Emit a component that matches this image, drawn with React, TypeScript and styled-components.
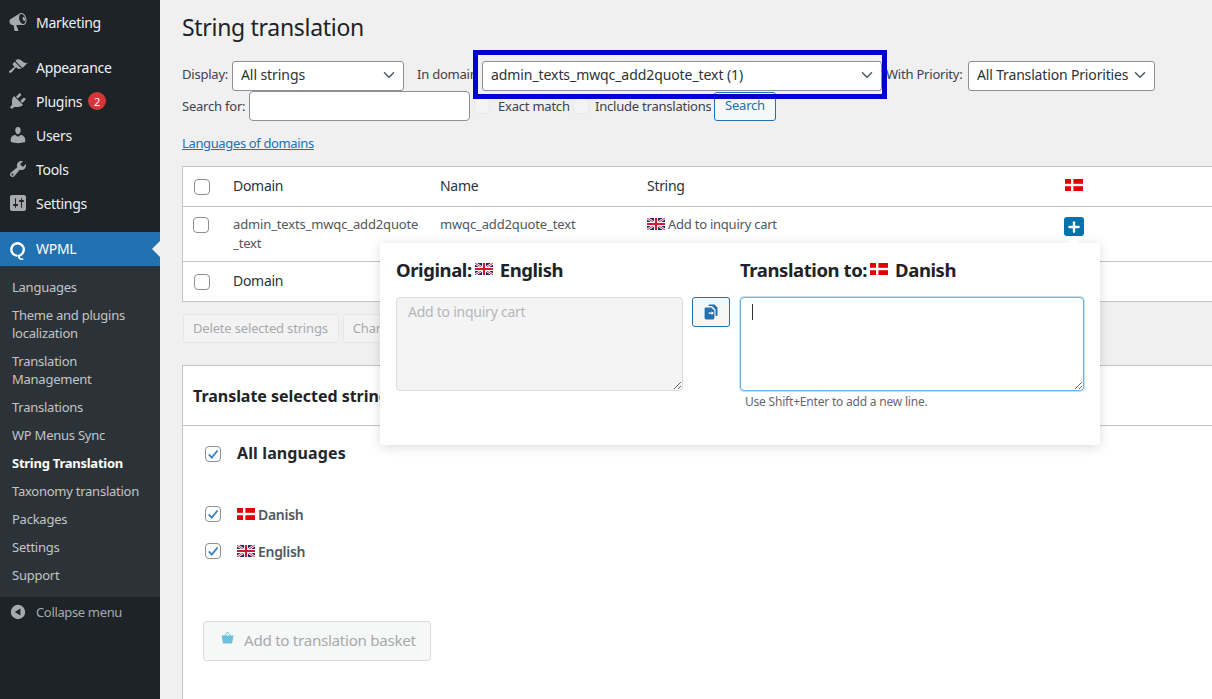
import React from "react";
import styled, { createGlobalStyle } from "styled-components";
import { ChevronDown, Plus } from "lucide-react";

const GlobalStyle = createGlobalStyle`
  html, body {
    margin: 0;
    padding: 0;
    height: 100%;
    overflow: hidden;
    background: #f0f0f1;
    font-family: "Noto Sans", sans-serif;
    font-size: 14px;
    letter-spacing: -0.3px;
    color: #3c434a;
  }
  * { box-sizing: border-box; }
`;

const Page = styled.div`
  display: flex;
  width: 1212px;
  height: 699px;
  overflow: hidden;
  position: relative;
`;

/* sidebar */

const Sidebar = styled.nav`
  width: 160px;
  flex: none;
  height: 699px;
  background: #1d2327;
  padding-top: 5px;
  color: #f0f0f1;
`;

const MenuItem = styled.div<{ $gap?: number }>`
  display: flex;
  align-items: center;
  height: 34px;
  margin-top: ${(p) => p.$gap ?? 0}px;
  padding-left: 8px;
  gap: 8px;
  svg { width: 20px; height: 20px; fill: #a7aaad; flex: none; }
`;

const CurrentItem = styled(MenuItem)`
  background: #2271b1;
  color: #fff;
  position: relative;
  margin-top: 12px;
  padding-bottom: 1px;
  svg { fill: none; width: 20px; height: 20px; position: relative; top: 2px; }
  &::after {
    content: "";
    position: absolute;
    right: 0;
    top: 9px;
    border: 8px solid transparent;
    border-right-color: #f0f0f1;
  }
`;

const Badge = styled.span`
  display: inline-flex;
  align-items: center;
  justify-content: center;
  width: 18px;
  height: 18px;
  margin-left: -2px;
  border-radius: 50%;
  background: #d63638;
  color: #fff;
  font-size: 11px;
  letter-spacing: 0;
`;

const Submenu = styled.div`
  background: #2c3338;
  padding: 7px 0 8px;
`;

const SubItem = styled.div<{ $active?: boolean }>`
  padding: 5px 12px;
  font-size: 13px;
  line-height: 18px;
  letter-spacing: -0.25px;
  color: ${(p) => (p.$active ? "#fff" : "#c3c4c7")};
  font-weight: ${(p) => (p.$active ? 700 : 400)};
`;

const Collapse = styled.div`
  display: flex;
  align-items: center;
  gap: 10px;
  height: 30px;
  padding-left: 10px;
  font-size: 13px;
  letter-spacing: -0.35px;
  color: #a7aaad;
  svg { width: 16px; height: 16px; fill: #a7aaad; flex: none; }
`;

/* main column */

const Main = styled.main`
  flex: none;
  width: 1052px;
  padding: 0 0 0 22px;
  overflow: hidden;
`;

const Title = styled.h1`
  margin: 0;
  padding-top: 12px;
  height: 60px;
  font-size: 23px;
  line-height: 30px;
  font-weight: 400;
  letter-spacing: -0.3px;
  color: #1d2327;
`;

const FilterRow = styled.div<{ $h: number }>`
  display: flex;
  align-items: center;
  height: ${(p) => p.$h}px;
  white-space: nowrap;
  font-size: 13px;
  letter-spacing: -0.22px;
`;

const Label = styled.span<{ $w: number }>`
  width: ${(p) => p.$w}px;
  flex: none;
  overflow: hidden;
  padding-bottom: 1px;
`;

const TopLabel = styled(Label)`
  padding-bottom: 3px;
`;

const Select = styled.div<{ $w: number; $tight?: boolean }>`
  display: flex;
  align-items: center;
  justify-content: space-between;
  width: ${(p) => p.$w}px;
  height: 30px;
  flex: none;
  padding: 0 5px 3px 8px;
  background: #fff;
  border: 1px solid #8c8f94;
  border-radius: 3px;
  color: #2c3338;
  font-size: 14px;
  letter-spacing: ${(p) => (p.$tight ? "-0.16px" : "-0.08px")};
  svg { width: 18px; height: 18px; color: #50575e; position: relative; top: 1px; }
`;

const SearchInput = styled.input`
  width: 221px;
  height: 30px;
  flex: none;
  background: #fff;
  border: 1px solid #8c8f94;
  border-radius: 4px;
`;

const FaintBox = styled.span`
  width: 16px;
  height: 16px;
  flex: none;
  background: #f3f3f4;
  border: 1px solid #e9e9ea;
  border-radius: 4px;
`;

const SearchButton = styled.button`
  width: 62px;
  height: 29px;
  flex: none;
  margin-left: 3px;
  padding: 0 0 2px;
  background: #f6f7f7;
  border: 1px solid #2271b1;
  border-radius: 3px;
  color: #2271b1;
  font: inherit;
  letter-spacing: inherit;
`;

const DomainsLink = styled.a`
  display: block;
  margin-top: 12px;
  height: 33px;
  line-height: 20px;
  font-size: 13px;
  letter-spacing: -0.36px;
  color: #2271b1;
  text-decoration: underline;
`;

const Table = styled.div`
  width: 1100px;
  background: #fff;
  border: 1px solid #c3c4c7;
`;

const Row = styled.div<{ $h: number; $line?: boolean }>`
  display: grid;
  grid-template-columns: 50px 207px 207px 418px 1fr;
  height: ${(p) => p.$h}px;
  padding-bottom: 2px;
  align-items: center;
  color: #2c3338;
  border-top: ${(p) => (p.$line ? "1px solid #c3c4c7" : "0")};
`;

const TopRow = styled(Row)`
  align-items: start;
  padding-top: 8px;
  padding-bottom: 0;
  font-size: 13px;
  line-height: 19px;
  letter-spacing: -0.14px;
  color: #50575e;
`;

const Box = styled.span`
  display: inline-flex;
  align-items: center;
  justify-content: center;
  width: 16px;
  height: 16px;
  background: #fff;
  border: 1px solid #8c8f94;
  border-radius: 4px;
  svg { width: 14px; height: 14px; }
`;

const BoxCell = styled.div`
  padding-left: 11px;
  padding-top: 3px;
  display: flex;
`;

const TopBoxCell = styled(BoxCell)`
  padding-top: 2px;
  padding-left: 10px;
`;

const FlagText = styled.span`
  display: inline-flex;
  align-items: baseline;
  gap: 3px;
  letter-spacing: -0.24px;
  svg { align-self: center; position: relative; top: -1px; }
`;

const PlusButton = styled.span`
  display: inline-flex;
  align-items: center;
  justify-content: center;
  width: 20px;
  height: 19px;
  margin: 2px 0 0 -1px;
  background: #0073aa;
  border-radius: 3px;
  color: #fff;
  svg { width: 16px; height: 16px; }
`;

const BulkBar = styled.div`
  display: flex;
  gap: 4px;
  padding: 12px 0 0 1px;
  height: 63px;
`;

const GreyButton = styled.button`
  height: 29px;
  padding: 0 10px 1px 9px;
  background: #f3f3f4;
  border: 1px solid #e6e6e7;
  border-radius: 3px;
  color: #a7aaad;
  font: inherit;
  font-size: 13px;
  letter-spacing: -0.17px;
  white-space: nowrap;
`;

const Card = styled.section`
  width: 1100px;
  height: 400px;
  background: #fff;
  border: 1px solid #c3c4c7;
`;

const CardHead = styled.h2`
  margin: 0;
  height: 60px;
  padding-left: 10px;
  line-height: 60px;
  font-size: 16px;
  font-weight: 700;
  letter-spacing: -0.03px;
  color: #1d2327;
  border-bottom: 1px solid #c3c4c7;
`;

const CardBody = styled.div`
  padding: 19px 0 0 22px;
`;

const LangRow = styled.div<{ $mt: number }>`
  display: flex;
  align-items: center;
  margin-top: ${(p) => p.$mt}px;
  gap: 16px;
  height: 18px;
`;

const AllLabel = styled.span`
  position: relative;
  top: -1px;
  font-size: 16px;
  font-weight: 700;
  letter-spacing: 0.12px;
  color: #23282d;
`;

const LangLabel = styled.span`
  display: inline-flex;
  align-items: center;
  gap: 3px;
  font-weight: 600;
  color: #50575e;
`;

const BasketButton = styled.div`
  display: flex;
  align-items: center;
  gap: 10px;
  width: 228px;
  height: 40px;
  margin: 61px 0 0 -2px;
  padding: 0 0 3px 17px;
  background: #f6f7f7;
  border: 1px solid #dcdcde;
  border-radius: 3px;
  color: #a7aaad;
  font-size: 15.2px;
  letter-spacing: -0.3px;
  svg { position: relative; top: -2px; }
`;

/* things lying over the page */

const Annotation = styled.div`
  position: absolute;
  left: 473px;
  top: 50px;
  width: 414px;
  height: 49px;
  border: 5px solid #0000d0;
  pointer-events: none;
`;

const Popover = styled.div`
  position: absolute;
  left: 380px;
  top: 243px;
  width: 720px;
  height: 202px;
  display: grid;
  grid-template-columns: 287px 57px 344px;
  grid-template-rows: 54px 94px auto;
  padding-left: 16px;
  background: #fff;
  border-radius: 3px;
  box-shadow: 0 2px 12px rgba(0, 0, 0, 0.14);
  &::before {
    content: "";
    position: absolute;
    left: 687px;
    top: -3px;
    width: 14px;
    height: 14px;
    background: #fff;
    transform: rotate(45deg);
  }
`;

const PopHead = styled.div`
  display: flex;
  align-items: center;
  gap: 3px;
  padding-bottom: 2px;
  font-size: 18.5px;
  font-weight: 700;
  letter-spacing: -0.42px;
  color: #1d2327;
  height: 54px;
`;

const HeadName = styled.span`
  margin-left: 4px;
`;

const PopArea = styled.textarea<{ $focus?: boolean }>`
  width: 100%;
  height: 94px;
  margin: 0;
  padding: 4px 11px;
  background: ${(p) => (p.$focus ? "#fff" : "#f4f4f4")};
  border: 1px solid ${(p) => (p.$focus ? "#6db3e8" : "#dcdcde")};
  border-radius: 4px;
  box-shadow: ${(p) => (p.$focus ? "0 0 0 1px #c4e1f6" : "none")};
  color: #b4b6b9;
  font: inherit;
  font-size: 14px;
  letter-spacing: -0.25px;
  outline: none;
`;

const AreaWrap = styled.div`
  position: relative;
  height: 94px;
`;

const Caret = styled.span`
  position: absolute;
  left: 12px;
  top: 7px;
  width: 1px;
  height: 16px;
  background: #2c3338;
`;

const CopyCell = styled.div`
  padding-left: 9px;
`;

const CopyButton = styled.span`
  display: flex;
  align-items: center;
  justify-content: center;
  width: 38px;
  height: 30px;
  background: #f6f7f7;
  border: 1px solid #2271b1;
  border-radius: 3px;
`;

const Hint = styled.div`
  grid-column: 3;
  padding: 3px 0 0 5px;
  font-size: 12px;
  line-height: 16px;
  letter-spacing: -0.2px;
  color: #646970;
`;

const DaFlag = ({ w = 18, h = 12 }: { w?: number; h?: number }) => (
  <svg width={w} height={h} viewBox="0 0 18 12">
    <rect width="18" height="12" fill="#e30000" />
    <rect x="6" width="2.4" height="12" fill="#fff" />
    <rect y="4.8" width="18" height="2.4" fill="#fff" />
  </svg>
);

const UkFlag = () => (
  <svg width="18" height="12" viewBox="0 0 18 12">
    <rect width="18" height="12" fill="#26246b" />
    <path d="M0 0 18 12M18 0 0 12" stroke="#fff" strokeWidth="2.4" />
    <path d="M0 0 18 12M18 0 0 12" stroke="#cf1b2b" strokeWidth="0.9" />
    <path d="M9 0V12M0 6H18" stroke="#fff" strokeWidth="4" />
    <path d="M9 0V12M0 6H18" stroke="#cf1b2b" strokeWidth="2.2" />
  </svg>
);

const Tick = () => (
  <svg viewBox="0 0 20 20">
    <path d="M4 10.5 8.2 15 16.5 5" fill="none" stroke="#3582c4" strokeWidth="2.6" />
  </svg>
);

const icons = {
  marketing:
    "M18.15 5.94c.46 1.62.38 3.22-.02 4.48-.42 1.28-1.26 2.18-2.3 2.48-.16.06-.26.06-.4.06-.06.02-.12.02-.18.02-.06.02-.14.02-.22.02h-6.8l2.22 5.5c.02.14-.06.26-.14.34-.08.1-.24.16-.34.16H6.95c-.1 0-.26-.06-.34-.16-.08-.08-.16-.2-.14-.34l-1-5.5H4.25l-.02-.02c-.5.06-1.08-.18-1.54-.62s-.88-1.08-1.06-1.88c-.24-.8-.2-1.56-.02-2.2.18-.62.58-1.08 1.06-1.3l.02-.02 9-5.4c.1-.06.18-.1.24-.16.06-.04.14-.08.24-.12.16-.08.28-.12.5-.18 1.04-.3 2.24.1 3.22.98s1.84 2.24 2.26 3.86zm-2.58 5.98h-.02c.4-.1.74-.34 1.04-.7.58-.7.86-1.76.86-3.04 0-.64-.1-1.3-.26-1.98-.34-1.36-1.02-2.5-1.78-3.24s-1.68-1.1-2.46-.88c-.82.22-1.4.96-1.7 2-.32 1.04-.28 2.36.06 3.72.38 1.36 1 2.5 1.8 3.24.78.74 1.62 1.1 2.46.88zm-.68-7.04c.16-.04.36-.04.58.06.2.1.4.22.6.4.2.16.38.4.56.64.18.26.3.54.4.84.28 1.02-.01 1.96-.65 2.16-.64.18-1.32-.42-1.6-1.44-.3-1.02 0-1.98.11-2.66z",
  appearance:
    "M14.48 11.06L7.41 3.99l1.5-1.5c.5-.56 2.3-.47 3.51.32 1.21.8 1.43 1.28 2.91 2.1 1.18.64 2.45 1.26 4.45.85zm-.71.71L6.7 4.7 4.93 6.47c-.39.39-.39 1.02 0 1.41l1.06 1.06c.39.39.39 1.03 0 1.42-.6.6-1.43 1.11-2.21 1.69-.35.26-.7.53-1.01.84C1.43 13.23.4 14.8 1.19 15.6c.79.79 2.35-.25 3.69-1.69.31-.31.57-.66.84-1.01.58-.78 1.09-1.61 1.69-2.21.39-.39 1.02-.39 1.41 0l1.06 1.06c.39.39 1.02.39 1.41 0z",
  plugins:
    "M13.11 4.36L9.87 7.6 8 5.73l3.24-3.24c.35-.34 1.05-.2 1.56.32.52.51.66 1.21.31 1.55zm-8 1.77l.91-1.12 9.01 9.01-1.19.84c-.71.71-2.63 1.16-3.82 1.16H6.14L4.9 17.26c-.59.59-1.54.59-2.12 0-.59-.58-.59-1.53 0-2.12l1.24-1.24v-3.88c0-1.13.4-3.19 1.09-3.89zm7.26 3.97l3.24-3.24c.34-.35 1.04-.21 1.55.31.52.51.66 1.21.31 1.55l-3.24 3.25z",
  users:
    "M10 9.25c-2.27 0-2.73-3.44-2.73-3.44C7 4.02 7.82 2 9.97 2c2.16 0 2.98 2.02 2.71 3.81 0 0-.41 3.44-2.68 3.44zm0 2.57L12.72 10c2.39 0 4.52 2.33 4.52 4.53v2.49s-3.65 1.13-7.24 1.13c-3.65 0-7.24-1.13-7.24-1.13v-2.49c0-2.25 1.94-4.48 4.47-4.48z",
  tools:
    "M16.68 9.77c-1.34 1.34-3.3 1.67-4.95.99l-5.41 6.52c-.99.99-2.59.99-3.58 0s-.99-2.59 0-3.57l6.52-5.42c-.68-1.65-.35-3.61.99-4.95 1.28-1.28 3.12-1.62 4.72-1.06l-2.89 2.89 2.82 2.82 2.86-2.87c.53 1.58.18 3.39-1.08 4.65zM3.81 16.21c.4.39 1.04.39 1.43 0 .4-.4.4-1.04 0-1.43-.39-.4-1.03-.4-1.43 0-.39.39-.39 1.03 0 1.43z",
  settings:
    "M18 16V4c0-1.1-.9-2-2-2H4c-1.1 0-2 .9-2 2v12c0 1.1.9 2 2 2h12c1.1 0 2-.9 2-2zM8 11h1c.55 0 1 .45 1 1s-.45 1-1 1H8v1.5c0 .28-.22.5-.5.5s-.5-.22-.5-.5V13H6c-.55 0-1-.45-1-1s.45-1 1-1h1V5.5c0-.28.22-.5.5-.5s.5.22.5.5V11zm5-2h-1c-.55 0-1-.45-1-1s.45-1 1-1h1V5.5c0-.28.22-.5.5-.5s.5.22.5.5V7h1c.55 0 1 .45 1 1s-.45 1-1 1h-1v5.5c0 .28-.22.5-.5.5s-.5-.22-.5-.5V9z",
};

const Dash = ({ d }: { d: string }) => (
  <svg viewBox="0 0 20 20">
    <path d={d} />
  </svg>
);

const WpmlIcon = () => (
  <svg viewBox="0 0 20 20">
    <path
      d="M8.5 14.6A6.2 6.2 0 1 1 15 11.5C14 13.4 12.5 14.4 11 14.8"
      stroke="#fff"
      strokeWidth="2.4"
      strokeLinecap="round"
    />
    <path d="M10.5 14.5c0 2.4 1.6 3.7 4.2 3.7" stroke="#fff" strokeWidth="1.6" strokeLinecap="round" />
  </svg>
);

const CollapseIcon = () => (
  <svg viewBox="0 0 20 20">
    <path d="M10 1a9 9 0 1 0 0 18 9 9 0 0 0 0-18zm3 4.5v9L6 10z" fillRule="evenodd" />
  </svg>
);

const CopyIcon = () => (
  <svg width="16" height="16" viewBox="0 0 16 16" fill="#2271b1">
    <path d="M6.5 .5h5l3 3V11a1 1 0 0 1-1 1h-1V5.5L9 2H5.4c.1-.9.5-1.5 1.1-1.5z" />
    <path d="M2.6 3.4h5.6L11.4 6.4V14a1.4 1.4 0 0 1-1.4 1.4H3A1.4 1.4 0 0 1 1.6 14V4.4a1 1 0 0 1 1-1z" />
    <path d="M5.6 8.4h3V7.2l2.2 1.9-2.2 1.9V9.8h-3z" fill="#fff" />
  </svg>
);

const BasketIcon = () => (
  <svg width="13" height="13" viewBox="0 0 13 13">
    <path d="M3.5 5 6.5 1l3 4" fill="none" stroke="#6fc0dc" strokeWidth="1" />
    <path d="M.5 4.6h12L11 12.5H2z" fill="#6fc0dc" />
  </svg>
);

const subItems = [
  "Languages",
  "Theme and plugins localization",
  "Translation Management",
  "Translations",
  "WP Menus Sync",
  "String Translation",
  "Taxonomy translation",
  "Packages",
  "Settings",
  "Support",
];

const App = () => {
  return (
    <Page>
      <GlobalStyle />
      <Sidebar>
        <MenuItem>
          <Dash d={icons.marketing} />
          Marketing
        </MenuItem>
        <MenuItem $gap={11}>
          <Dash d={icons.appearance} />
          Appearance
        </MenuItem>
        <MenuItem>
          <Dash d={icons.plugins} />
          Plugins
          <Badge>2</Badge>
        </MenuItem>
        <MenuItem>
          <Dash d={icons.users} />
          Users
        </MenuItem>
        <MenuItem>
          <Dash d={icons.tools} />
          Tools
        </MenuItem>
        <MenuItem>
          <Dash d={icons.settings} />
          Settings
        </MenuItem>
        <CurrentItem>
          <WpmlIcon />
          WPML
        </CurrentItem>
        <Submenu>
          {subItems.map((s) => (
            <SubItem key={s} $active={s === "String Translation"}>
              {s}
            </SubItem>
          ))}
        </Submenu>
        <Collapse>
          <CollapseIcon />
          Collapse menu
        </Collapse>
      </Sidebar>

      <Main>
        <Title>String translation</Title>
        <FilterRow $h={31}>
          <TopLabel $w={50}>Display:</TopLabel>
          <Select $w={172}>
            All strings
            <ChevronDown />
          </Select>
          <Label $w={13} />
          <TopLabel $w={57}>In domain:</TopLabel>
          <Label $w={8} />
          <Select $w={400}>
            admin_texts_mwqc_add2quote_text (1)
            <ChevronDown />
          </Select>
          <Label $w={4} />
          <TopLabel $w={82}>With Priority:</TopLabel>
          <Select $w={187} $tight>
            All Translation Priorities
            <ChevronDown />
          </Select>
        </FilterRow>
        <FilterRow $h={30}>
          <Label $w={67}>Search for:</Label>
          <SearchInput />
          <Label $w={4} />
          <FaintBox />
          <Label $w={8} />
          <Label $w={75}>Exact match</Label>
          <FaintBox />
          <Label $w={6} />
          <Label $w={116}>Include translations</Label>
          <SearchButton>Search</SearchButton>
        </FilterRow>
        <DomainsLink>Languages of domains</DomainsLink>

        <Table>
          <Row $h={39}>
            <BoxCell>
              <Box />
            </BoxCell>
            <div>Domain</div>
            <div>Name</div>
            <div>String</div>
            <div>
              <DaFlag w={18} h={12} />
            </div>
          </Row>
          <TopRow $h={55} $line>
            <TopBoxCell>
              <Box />
            </TopBoxCell>
            <div>
              admin_texts_mwqc_add2quote
              <br />
              _text
            </div>
            <div>mwqc_add2quote_text</div>
            <div>
              <FlagText>
                <UkFlag />
                Add to inquiry cart
              </FlagText>
            </div>
            <div>
              <PlusButton>
                <Plus strokeWidth={3.5} />
              </PlusButton>
            </div>
          </TopRow>
          <Row $h={40} $line>
            <BoxCell>
              <Box />
            </BoxCell>
            <div>Domain</div>
            <div />
            <div />
            <div />
          </Row>
        </Table>

        <BulkBar>
          <GreyButton>Delete selected strings</GreyButton>
          <GreyButton>Change translation priority</GreyButton>
        </BulkBar>

        <Card>
          <CardHead>Translate selected strings</CardHead>
          <CardBody>
            <LangRow $mt={0}>
              <Box>
                <Tick />
              </Box>
              <AllLabel>All languages</AllLabel>
            </LangRow>
            <LangRow $mt={42}>
              <Box>
                <Tick />
              </Box>
              <LangLabel>
                <DaFlag />
                Danish
              </LangLabel>
            </LangRow>
            <LangRow $mt={19}>
              <Box>
                <Tick />
              </Box>
              <LangLabel>
                <UkFlag />
                English
              </LangLabel>
            </LangRow>
            <BasketButton>
              <BasketIcon />
              Add to translation basket
            </BasketButton>
          </CardBody>
        </Card>
      </Main>

      <Annotation />

      <Popover>
        <PopHead>
          Original:
          <UkFlag />
          <HeadName>English</HeadName>
        </PopHead>
        <div />
        <PopHead>
          Translation to:
          <DaFlag />
          <HeadName>Danish</HeadName>
        </PopHead>
        <PopArea disabled defaultValue="Add to inquiry cart" />
        <CopyCell>
          <CopyButton>
            <CopyIcon />
          </CopyButton>
        </CopyCell>
        <AreaWrap>
          <PopArea $focus />
          <Caret />
        </AreaWrap>
        <Hint>Use Shift+Enter to add a new line.</Hint>
      </Popover>
    </Page>
  );
};

export default App;
